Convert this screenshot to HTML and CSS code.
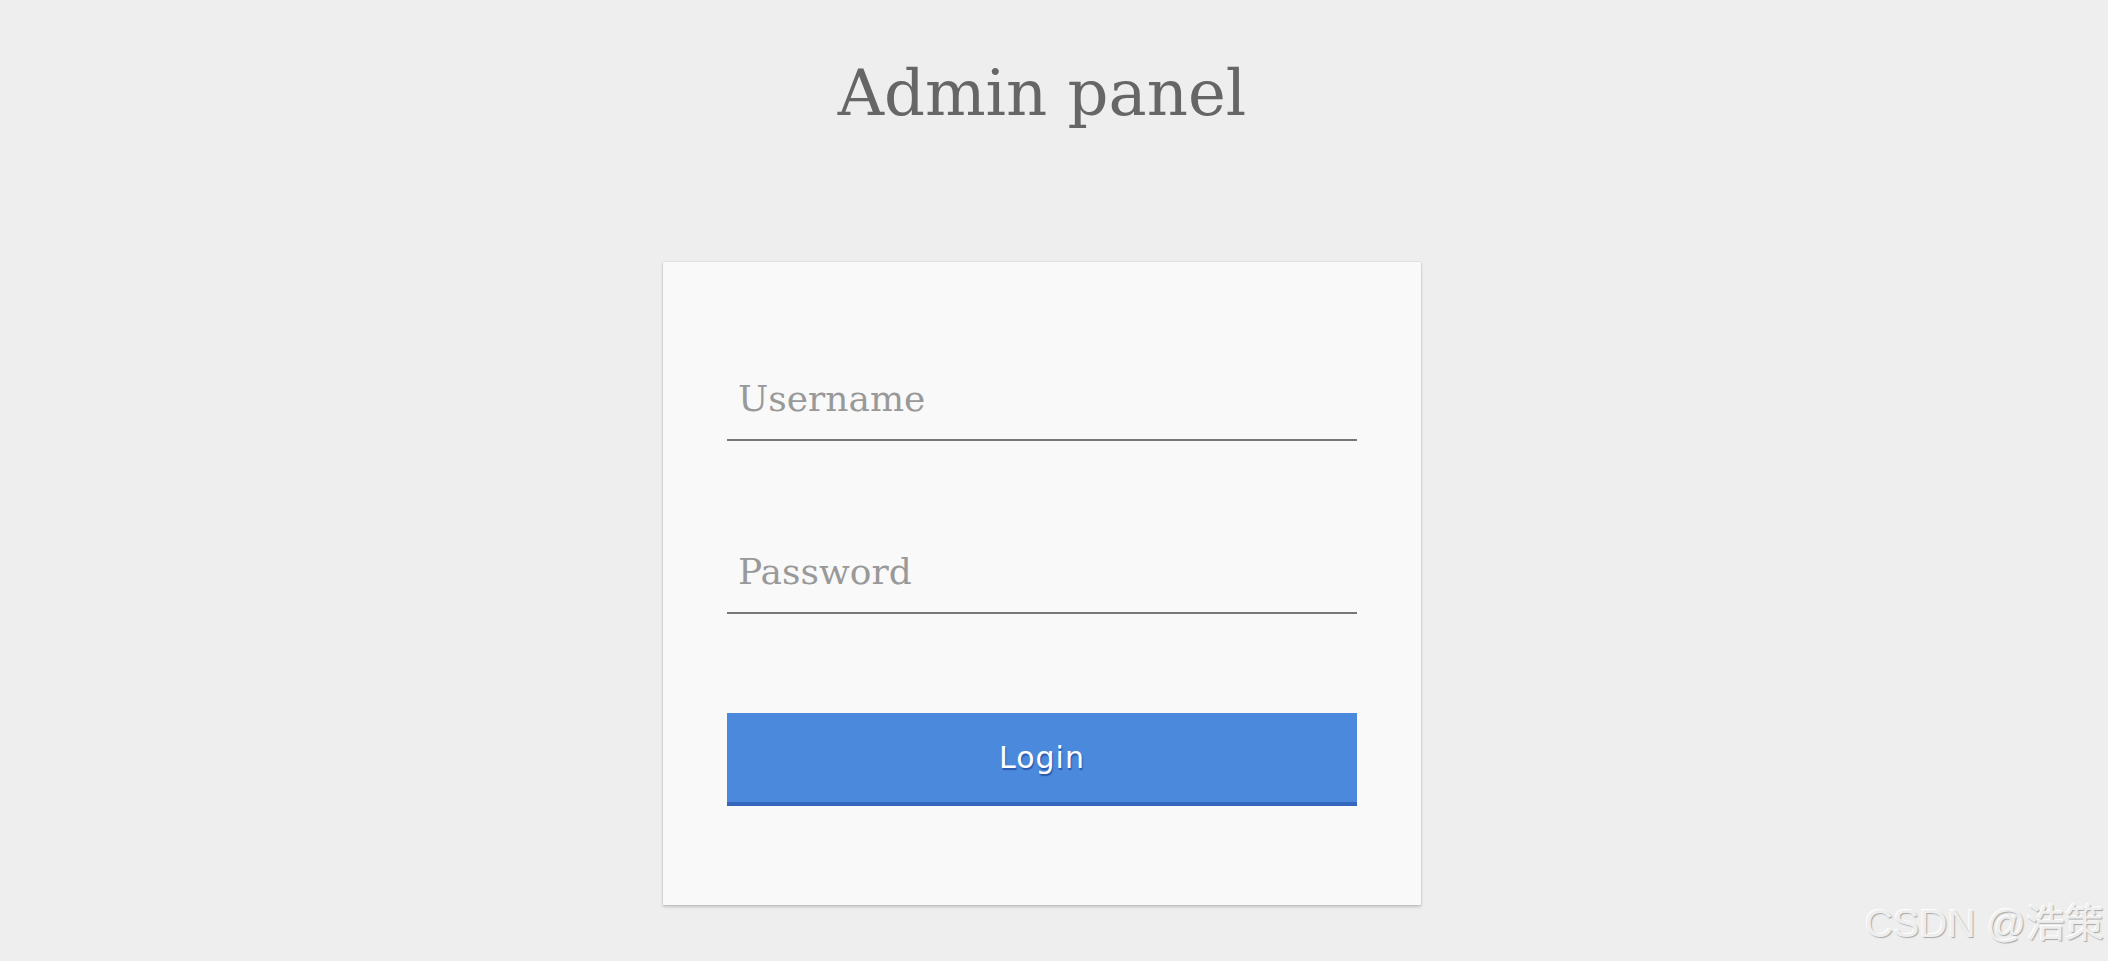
FILE: index.html
```html
<!DOCTYPE html>
<html>
<head>
<meta charset="utf-8">
<link rel="stylesheet" href="styles.css">
</head>
<body>
<div class="page">
  <h1 class="title">Admin panel</h1>
  <form class="card">
    <input class="field" type="text" placeholder="Username">
    <input class="field field-pass" type="password" placeholder="Password">
    <button class="login" type="button">Login</button>
  </form>
</div>
<div class="watermark">CSDN @浩策</div>
</body>
</html>
```
FILE: styles.css
```css
html, body {
  margin: 0;
  padding: 0;
  background: #eeeeee;
  height: 100%;
  overflow: hidden;
}
.page {
  width: 2084px;
  display: flex;
  flex-direction: column;
  align-items: center;
}
.title {
  margin: 56px 0 132px;
  font-family: "DejaVu Serif", serif;
  font-weight: normal;
  font-size: 64px;
  line-height: 74px;
  color: #666666;
}
.card {
  box-sizing: border-box;
  width: 758px;
  height: 643px;
  padding: 98px 64px;
  background: #f9f9f9;
  box-shadow: 0 0 1px rgba(0, 0, 0, 0.25), 0 2px 3px rgba(0, 0, 0, 0.18);
  display: flex;
  flex-direction: column;
}
.field {
  box-sizing: border-box;
  width: 100%;
  height: 81px;
  display: block;
  border: none;
  border-bottom: 2px solid #777777;
  background: transparent;
  outline: none;
  padding: 17px 10px 20px 11px;
  font-family: "DejaVu Serif", serif;
  font-size: 36px;
  line-height: 42px;
  color: #555;
  border-radius: 0;
}
.field::placeholder {
  color: #999999;
}
.field-pass {
  margin-top: 92px;
}
.login {
  margin-top: 99px;
  height: 93px;
  width: 100%;
  border: none;
  border-bottom: 4px solid #3568bd;
  background: #4a89dc;
  color: #ffffff;
  font-family: "DejaVu Sans", sans-serif;
  font-size: 30px;
  letter-spacing: 1px;
  text-shadow: 1px 2px 1px rgba(30, 70, 150, 0.7);
  border-radius: 0;
  padding: 0;
}
.watermark {
  position: absolute;
  right: 4px;
  bottom: 13px;
  font-family: "Liberation Sans", "Noto Sans CJK SC", sans-serif;
  font-size: 39px;
  color: #eeeeee;
  text-shadow: 1px 1px 1px #a8a8a8, -1px -1px 0 #ffffff;
}
```
